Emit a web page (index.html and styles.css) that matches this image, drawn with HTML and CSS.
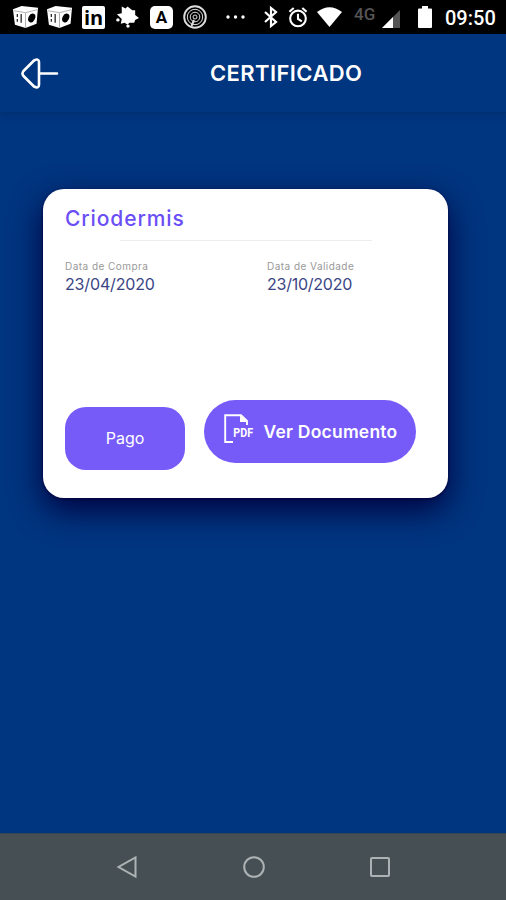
FILE: index.html
```html
<!DOCTYPE html>
<html lang="pt">
<head>
<meta charset="utf-8">
<title>Certificado</title>
<meta name="viewport" content="width=device-width">
<link rel="stylesheet" href="styles.css">
</head>
<body>
<div class="status">
  <div class="notifications">
    <svg class="box" viewBox="0 0 26 24"><path d="M0 4 9 .5 26 2.500 24.500 19 13 23.500 2 20Z" fill="#fff"/><path d="M1 5.500 13 7.500 25 4.500M13 8V23" fill="none" stroke="#999" stroke-width=".8"/><path d="M4.500 9V12M4.500 14V17M8.500 9V18" fill="none" stroke="#222" stroke-width="1.300"/><ellipse cx="19.500" cy="13" rx="3.400" ry="4.800" transform="rotate(25 19.500 13)" fill="#000"/></svg>
    <svg class="box" viewBox="0 0 26 24"><path d="M0 4 9 .5 26 2.500 24.500 19 13 23.500 2 20Z" fill="#fff"/><path d="M1 5.500 13 7.500 25 4.500M13 8V23" fill="none" stroke="#999" stroke-width=".8"/><path d="M4.500 9V12M4.500 14V17M8.500 9V18" fill="none" stroke="#222" stroke-width="1.300"/><ellipse cx="19.500" cy="13" rx="3.400" ry="4.800" transform="rotate(25 19.500 13)" fill="#000"/></svg>
    <span class="tile linkedin">in</span>
    <svg class="leaf" viewBox="0 0 24 24"><path d="M6 1 10 3 12 1 17 5 20 5 20 10 24 13 20 15 19 18 14 18 12 20 9 18 5 19 6 14 1 9 6 8Z" fill="#fff"/><circle cx="2" cy="15" r="1.800" fill="#fff"/><circle cx="12.500" cy="21.500" r="1.800" fill="#fff"/></svg>
    <span class="tile letter">A</span>
    <svg class="radar" viewBox="0 0 24 24" fill="none" stroke="#ddd"><circle cx="12" cy="12" r="10.800" stroke-width="1.900"/><circle cx="12" cy="12" r="7.700"/><circle cx="12" cy="12" r="4.800"/><circle cx="12" cy="12" r="2"/><path d="M11 15 8.500 21" stroke-width="2"/></svg>
    <svg class="dots" viewBox="0 0 20 4" fill="#fff"><circle cx="2" cy="2" r="1.700"/><circle cx="9.500" cy="2" r="1.700"/><circle cx="17" cy="2" r="1.700"/></svg>
  </div>
  <div class="system">
    <svg class="bluetooth" viewBox="0 0 14 22"><path d="M1 6 12 16 7 20V2L12 6 1 16" fill="none" stroke="#fff" stroke-width="2.200"/></svg>
    <svg class="alarm" viewBox="0 0 20 22" fill="none" stroke="#fff" stroke-width="2.200"><circle cx="10" cy="12" r="8.200"/><path d="M1 5 5.500 1M19 5 14.500 1M10 7V12.500L14 15"/></svg>
    <svg class="wifi" viewBox="0 0 25 20"><path d="M0 5Q12.500-4.500 25 5L12.500 20Z" fill="#fff"/></svg>
    <span class="network">4G</span>
    <svg class="signal" viewBox="0 0 18 18"><path d="M18 0V18H0Z" fill="#555"/><path d="M11 7V18H0Z" fill="#fff"/></svg>
    <svg class="battery" viewBox="0 0 14 22"><path d="M4 0H10V2.500H13Q14 2.500 14 3.500V21Q14 22 13 22H1Q0 22 0 21V3.500Q0 2.500 1 2.500H4Z" fill="#fff"/></svg>
    <span class="clock">09:50</span>
  </div>
</div>
<header class="header">
  <svg class="back" viewBox="0 0 38 32" fill="none" stroke="#fff" stroke-width="2.600" stroke-linecap="round" stroke-linejoin="round"><path d="M13 2.500 2.500 13Q.5 15.500 2.500 18L13 28.500Q17.800 31 18 27V4Q17.800 0 13 2.500ZM18 15.500H36"/></svg>
  <h1 class="title">CERTIFICADO</h1>
</header>
<main class="main">
  <section class="card">
    <h2 class="name">Criodermis</h2>
    <div class="divider"></div>
    <div class="dates">
      <div><div class="label">Data de Compra</div><div class="date date-buy">23/04/2020</div></div>
      <div><div class="label">Data de Validade</div><div class="date">23/10/2020</div></div>
    </div>
    <div class="actions">
      <div class="paid">Pago</div>
      <button class="document">
        <svg class="pdf" viewBox="0 0 30 30"><path d="M9 28H1.200V1.200H17L23 7V11" fill="none" stroke="#fff" stroke-width="1.900"/><path d="M16 1V8H23Z" fill="#fff"/><text class="pdf-text" x="9.300" y="23" textLength="19.700" lengthAdjust="spacingAndGlyphs">PDF</text></svg>
        <span>Ver Documento</span>
      </button>
    </div>
  </section>
</main>
<nav class="nav">
  <svg viewBox="0 0 24 24"><path d="M20.500 2.500V21.500L3.500 12Z"/></svg>
  <svg viewBox="0 0 24 24"><circle cx="12" cy="12" r="9.800"/></svg>
  <svg viewBox="0 0 24 24"><rect x="3" y="3" width="18" height="18" rx="1"/></svg>
</nav>
</body>
</html>
```
FILE: styles.css
```css
* { box-sizing: border-box; }
body {
  margin: 0;
  width: 506px;
  height: 900px;
  display: flex;
  flex-direction: column;
  background: #00357f;
  font-family: Inter, sans-serif;
  overflow: hidden;
}
svg { display: block; flex: none; }
h1, h2 { margin: 0; }

.status {
  height: 34px;
  display: flex;
  justify-content: space-between;
  padding: 0 11px 0 13px;
  background: #000;
  color: #fff;
}
.notifications, .system { display: flex; align-items: center; }
.box { width: 25px; height: 24px; margin-right: 9px; }
.tile {
  width: 23px;
  height: 23px;
  background: #fff;
  color: #000;
  text-align: center;
  font: bold 20px/24px "Open Sans", sans-serif;
  border-radius: 2px;
}
.linkedin { margin: 0 11px 0 1px; }
.leaf { width: 23px; height: 24px; }
.letter { margin: 0 11px; border-radius: 5px; font: bold 17px/23px Roboto, sans-serif; }
.radar { width: 24px; height: 24px; margin: 0 19px 0 -1px; }
.dots { width: 20px; height: 4px; }
.bluetooth { width: 14px; height: 22px; margin-right: 10px; }
.alarm { width: 20px; height: 21px; margin-right: 9px; }
.wifi { width: 25px; height: 20px; margin-right: 12px; }
.network { width: 28px; color: #555; font: 500 17px/20px Roboto, sans-serif; margin-top: -7px; }
.signal { width: 18px; height: 18px; margin: 3px 18px 0 0; }
.battery { width: 14px; height: 22px; margin-right: 13px; }
.clock { width: 50px; margin-top: 2px; font: 500 20px/34px Roboto, sans-serif; white-space: nowrap; }

.header {
  height: 79px;
  display: flex;
  align-items: center;
  padding-left: 21px;
  border-bottom: 1px solid #003071;
  box-shadow: 0 2px 5px #002b6a80;
}
.back { width: 38px; height: 32px; margin-top: 2px; }
.title {
  margin: 0 0 0 151px;
  color: #fff;
  font-size: 22px;
  line-height: 30px;
  font-weight: 600;
  letter-spacing: .4px;
}

.main { flex: 1; padding: 76px 58px 0 43px; }
.card {
  height: 309px;
  padding: 16px 22px 0;
  border-radius: 21px;
  background: #fff;
  box-shadow: 0 12px 32px #00003f, 0 1px 3px #00003b;
}
.name {
  color: #6b4ff5;
  font-size: 21px;
  line-height: 28px;
  font-weight: 500;
  letter-spacing: .9px;
}
.divider { width: 252px; height: 1px; margin: 7px 0 0 55px; background: #ededf0; }
.dates { display: grid; grid-template-columns: 202px 1fr; margin-top: 19px; }
.label { color: #999; font-size: 10px; line-height: 12px; white-space: nowrap; letter-spacing: .46px; }
.date { color: #394584; font-size: 16px; line-height: 25px; font-weight: 400; letter-spacing: -.25px; }
.date-buy { letter-spacing: -.15px; }
.actions { display: flex; gap: 19px; margin-top: 103px; }
.paid {
  width: 120px;
  height: 63px;
  margin-top: 7px;
  border-radius: 21px;
  background: #765bf9;
  color: #fff;
  text-align: center;
  font-size: 16px;
  line-height: 62px;
}
.document {
  width: 212px;
  height: 63px;
  padding: 0 0 0 20px;
  border: 0;
  border-radius: 32px;
  background: #765bf9;
  color: #fff;
  display: flex;
  align-items: center;
  gap: 9.500px;
  font: 600 17.500px/24px Inter, sans-serif;
  letter-spacing: .22px;
  white-space: nowrap;
  flex: none;
}
.pdf { width: 30px; height: 30px; margin-top: -5px; }
.pdf-text { font: bold 12px Roboto, sans-serif; letter-spacing: 0; fill: #fff; }

.nav {
  height: 67px;
  display: flex;
  justify-content: center;
  align-items: center;
  gap: 102.500px;
  padding-left: 1px;
  background: #464f53;
  border-top: 1px solid #344752;
}
.nav svg { width: 24px; height: 24px; fill: none; stroke: #adb3b5; stroke-width: 2; }
```
